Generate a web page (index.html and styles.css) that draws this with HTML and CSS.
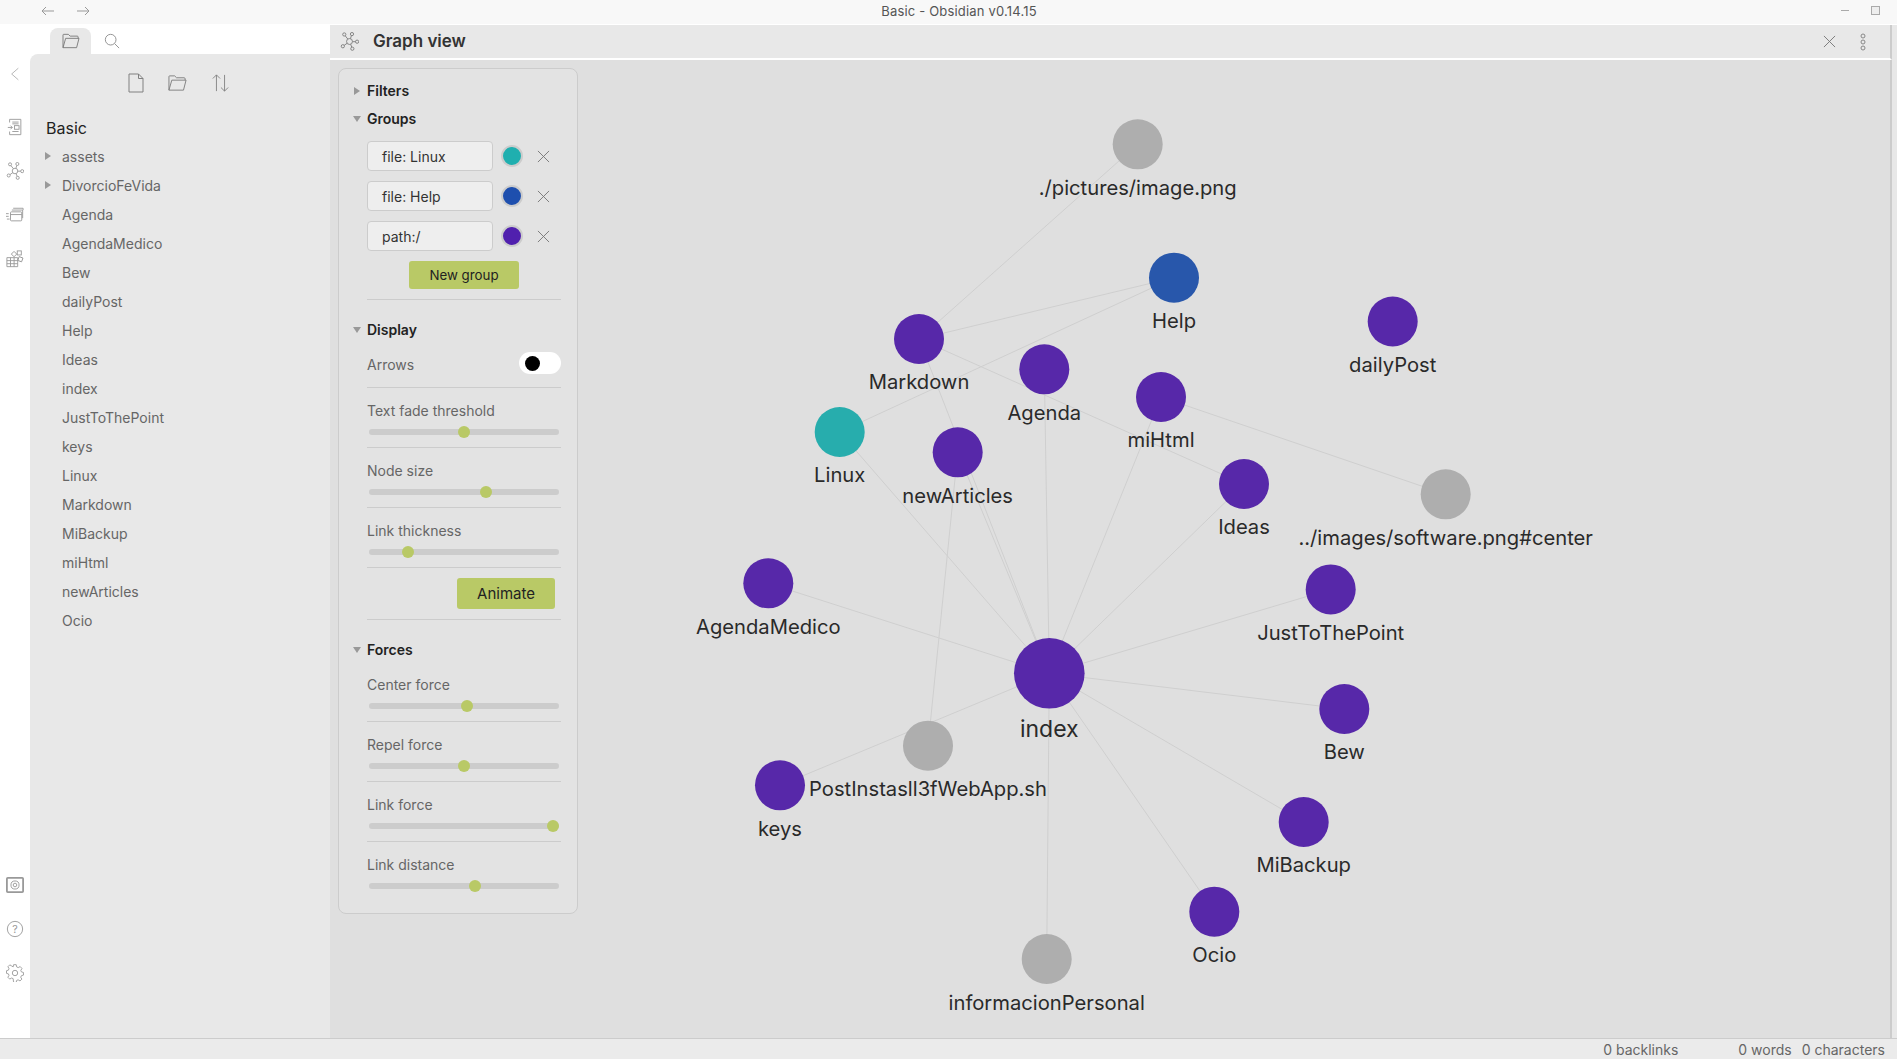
FILE: index.html
```html
<!DOCTYPE html>
<html lang="en">
<head>
<meta charset="utf-8">
<title>Basic - Obsidian v0.14.15</title>
<link rel="stylesheet" href="styles.css">
</head>
<body>
<svg class="defs" width="0" height="0">
  <symbol id="i-graph" viewBox="0 0 20 20">
    <g fill="none" stroke="currentColor" stroke-width="1">
      <circle cx="10" cy="10" r="3.1"/><circle cx="4.5" cy="2.6" r="1.7"/><circle cx="12.6" cy="2.2" r="1.7"/><circle cx="18" cy="10.2" r="1.7"/><circle cx="13" cy="17.6" r="1.7"/><circle cx="3" cy="15" r="1.7"/>
      <path d="M5.5 4 8.2 7.4M12 3.9 11 7M16.3 10.2H13.1M12.4 16 11.2 12.9M4.4 14 7.5 11.9"/>
    </g>
  </symbol>
  <symbol id="i-folder" viewBox="0 0 20 18">
    <path d="M1 16.5V2.2Q1 1.5 1.8 1.5H7L9 3.5H17Q18 3.5 18 4.5V6M1 16.5H16.3L19 6H4L1 16.5Z" fill="none" stroke="currentColor" stroke-width="1"/>
  </symbol>
</svg>

<header class="titlebar">
  <div class="nav">
    <svg class="nav-arrow" viewBox="0 0 14 10"><path d="M13 5H1M5 1 1 5l4 4"/></svg>
    <svg class="nav-arrow" viewBox="0 0 14 10"><path d="M1 5h12M9 1l4 4-4 4"/></svg>
  </div>
  <div class="app-title">Basic - Obsidian v0.14.15</div>
  <div class="win-ctl">
    <span class="win-min"></span>
    <span class="win-max"></span>
  </div>
</header>

<div class="workspace">
  <nav class="ribbon">
    <svg class="rib-chevron" viewBox="0 0 12 16"><path d="M10 1 2 8l8 7"/></svg>
    <div class="rib-top">
      <svg class="rib-ico" viewBox="0 0 18 20"><g fill="none" stroke="currentColor"><path d="M3 5V1.5h12.5v17H3V15"/><path d="M6 4.5h7M6 6.5h7"/><path d="M1 10.500h5M4 8.500l2 2-2 2"/><rect x="8.500" y="8.500" width="5" height="4"/><path d="M6 15h7"/></g></svg>
      <svg class="rib-ico" viewBox="0 0 20 20"><use href="#i-graph"/></svg>
      <svg class="rib-ico" viewBox="0 0 20 18"><g fill="none" stroke="currentColor"><rect x="5" y="5.500" width="12.500" height="10" rx="1"/><path d="M5 8.500h12.500M6.500 3.500h12v9M8 1.500h11v2M0 7.500h3M0 10.500h3M1 13.500h3"/></g></svg>
      <svg class="rib-ico" viewBox="0 0 20 20"><g fill="none" stroke="currentColor"><path d="M1 8.500h12v10H1zM5 8.500v10M9 8.500v10M1 11.800h12M1 15.200h12"/><rect x="12.500" y="1" width="4.500" height="4.500"/><rect x="6.800" y="2.500" width="4.200" height="4.200" transform="rotate(45 9 4.600)"/><rect x="13.800" y="8" width="4.500" height="4.500" transform="rotate(20 16 10)"/></g></svg>
    </div>
    <div class="rib-bottom">
      <svg class="rib-ico" viewBox="0 0 20 18"><g fill="none" stroke="currentColor"><rect x="1" y="1" width="18" height="16" rx="1" stroke-width="2"/><circle cx="10" cy="9" r="4.500"/><circle cx="10" cy="9" r="2"/></g></svg>
      <svg class="rib-ico" viewBox="0 0 20 20"><circle cx="10" cy="10" r="8.500" fill="none" stroke="currentColor"/><text class="help-q" x="10" y="14.500">?</text></svg>
      <svg class="rib-ico" viewBox="0 0 20 20"><g fill="none" stroke="currentColor"><circle cx="10" cy="10" r="3"/><path d="M8.500 1h3l.5 2.500 1.700.8 2.300-1.200 2 2.200-1.300 2.200.6 1.600 2.400.7v3l-2.400.7-.7 1.700 1.300 2.100-2.100 2.100-2.200-1.300-1.600.7-.5 2.300h-3L8 16.800l-1.700-.7-2.200 1.200L2 15.200l1.300-2.100-.7-1.700L.5 10.800v-3l2.100-.6.700-1.700L2.100 3.300 4.200 1.200l2.100 1.200L8 3.500z" transform="translate(.100 -.2) scale(.98)"/></g></svg>
    </div>
  </nav>

  <aside class="left-pane">
    <div class="tabs">
      <div class="tab tab-active"><svg class="tab-ico" viewBox="0 0 20 18"><use href="#i-folder"/></svg></div>
      <div class="tab"><svg class="tab-ico" viewBox="0 0 18 18"><g fill="none" stroke="currentColor"><circle cx="7.500" cy="7.500" r="6"/><path d="m12 12 5 5"/></g></svg></div>
    </div>
    <div class="sidebar">
      <div class="file-actions">
        <svg class="act-ico" viewBox="0 0 16 20"><path d="M1 1h9.500L15 5.500V19H1zM10.500 1v4.500H15" fill="none" stroke="currentColor"/></svg>
        <svg class="act-ico act-wide" viewBox="0 0 20 18"><use href="#i-folder"/></svg>
        <svg class="act-ico act-wide" viewBox="0 0 20 20"><path d="M5.500 19V1M1.500 5l4-4 4 4M14.500 1v18M10.500 15l4 4 4-4" fill="none" stroke="currentColor"/></svg>
      </div>
      <div class="vault">Basic</div>
      <ul class="files">
        <li class="file folder">assets</li>
        <li class="file folder">DivorcioFeVida</li>
        <li class="file">Agenda</li>
        <li class="file">AgendaMedico</li>
        <li class="file">Bew</li>
        <li class="file">dailyPost</li>
        <li class="file">Help</li>
        <li class="file">Ideas</li>
        <li class="file">index</li>
        <li class="file">JustToThePoint</li>
        <li class="file">keys</li>
        <li class="file">Linux</li>
        <li class="file">Markdown</li>
        <li class="file">MiBackup</li>
        <li class="file">miHtml</li>
        <li class="file">newArticles</li>
        <li class="file">Ocio</li>
      </ul>
    </div>
  </aside>

  <main class="main">
    <div class="view-head">
      <svg class="view-ico" viewBox="0 0 20 20"><use href="#i-graph"/></svg>
      <h1 class="view-title">Graph view</h1>
      <svg class="head-x" viewBox="0 0 14 14"><path d="m1 1 12 12M13 1 1 13"/></svg>
      <svg class="head-dots" viewBox="0 0 6 18"><g fill="none" stroke="currentColor"><circle cx="3" cy="3" r="2"/><circle cx="3" cy="9" r="2"/><circle cx="3" cy="15" r="2"/></g></svg>
    </div>
    <div class="graph">
      <svg class="canvas" viewBox="330 60 1560 978">
        <g class="edges">
          <line x1="919" y1="339" x2="1137.700" y2="144.300"/>
          <line x1="919" y1="339" x2="1174" y2="277.700"/>
          <line x1="839.700" y1="432" x2="1174" y2="277.700"/>
          <line x1="919" y1="339" x2="1049.300" y2="673.300"/>
          <line x1="919" y1="339" x2="1244" y2="484"/>
          <line x1="1044.300" y1="369.300" x2="1049.300" y2="673.300"/>
          <line x1="1161" y1="397" x2="1049.300" y2="673.300"/>
          <line x1="1161" y1="397" x2="1445.700" y2="494.300"/>
          <line x1="839.700" y1="432" x2="1049.300" y2="673.300"/>
          <line x1="957.700" y1="452.300" x2="1049.300" y2="673.300"/>
          <line x1="957.700" y1="452.300" x2="928" y2="745.700"/>
          <line x1="1244" y1="484" x2="1049.300" y2="673.300"/>
          <line x1="1330.700" y1="589.400" x2="1049.300" y2="673.300"/>
          <line x1="1344.300" y1="709" x2="1049.300" y2="673.300"/>
          <line x1="1303.700" y1="822" x2="1049.300" y2="673.300"/>
          <line x1="1214.300" y1="911.700" x2="1049.300" y2="673.300"/>
          <line x1="768.300" y1="583.300" x2="1049.300" y2="673.300"/>
          <line x1="780" y1="785.300" x2="1049.300" y2="673.300"/>
          <line x1="1046.700" y1="959" x2="1049.300" y2="673.300"/>
        </g>
        <g class="nodes">
          <circle class="n-gray" cx="1137.700" cy="144.300" r="25"/>
          <circle class="n-blue" cx="1174" cy="277.700" r="25"/>
          <circle class="n-purple" cx="919" cy="339" r="25"/>
          <circle class="n-purple" cx="1044.300" cy="369.300" r="25"/>
          <circle class="n-purple" cx="1161" cy="397" r="25"/>
          <circle class="n-teal" cx="839.700" cy="432" r="25"/>
          <circle class="n-purple" cx="957.700" cy="452.300" r="25"/>
          <circle class="n-purple" cx="1244" cy="484" r="25"/>
          <circle class="n-purple" cx="1392.700" cy="321.500" r="25"/>
          <circle class="n-gray" cx="1445.700" cy="494.300" r="25"/>
          <circle class="n-purple" cx="1330.700" cy="589.400" r="25"/>
          <circle class="n-purple" cx="768.300" cy="583.300" r="25"/>
          <circle class="n-purple" cx="1049.300" cy="673.300" r="35.300"/>
          <circle class="n-purple" cx="1344.300" cy="709" r="25"/>
          <circle class="n-gray" cx="928" cy="745.700" r="25"/>
          <circle class="n-purple" cx="780" cy="785.300" r="25"/>
          <circle class="n-purple" cx="1303.700" cy="822" r="25"/>
          <circle class="n-purple" cx="1214.300" cy="911.700" r="25"/>
          <circle class="n-gray" cx="1046.700" cy="959" r="25"/>
        </g>
        <g class="labels">
          <text x="1137.700" y="194.500">./pictures/image.png</text>
          <text x="1174" y="328">Help</text>
          <text x="919" y="389">Markdown</text>
          <text x="1044.300" y="419.500">Agenda</text>
          <text x="1161" y="447">miHtml</text>
          <text x="839.700" y="482">Linux</text>
          <text x="957.700" y="502.500">newArticles</text>
          <text x="1244" y="534">Ideas</text>
          <text x="1392.700" y="371.500">dailyPost</text>
          <text x="1445.700" y="544.500">../images/software.png#center</text>
          <text x="1330.700" y="639.500">JustToThePoint</text>
          <text x="768.300" y="633.500">AgendaMedico</text>
          <text class="lbl-big" x="1049.300" y="736.500">index</text>
          <text x="1344.300" y="759">Bew</text>
          <text x="928" y="796">PostInstasll3fWebApp.sh</text>
          <text x="780" y="835.500">keys</text>
          <text x="1303.700" y="872">MiBackup</text>
          <text x="1214.300" y="961.500">Ocio</text>
          <text x="1046.700" y="1009.500">informacionPersonal</text>
        </g>
      </svg>

      <section class="controls">
        <div class="sec-head closed">Filters</div>
        <div class="sec-head">Groups</div>
        <div class="groups">
          <div class="group"><div class="g-input">file: Linux</div><span class="swatch sw-teal"></span><svg class="g-x" viewBox="0 0 14 14"><path d="m1 1 12 12M13 1 1 13"/></svg></div>
          <div class="group"><div class="g-input">file: Help</div><span class="swatch sw-blue"></span><svg class="g-x" viewBox="0 0 14 14"><path d="m1 1 12 12M13 1 1 13"/></svg></div>
          <div class="group"><div class="g-input">path:/</div><span class="swatch sw-purple"></span><svg class="g-x" viewBox="0 0 14 14"><path d="m1 1 12 12M13 1 1 13"/></svg></div>
          <div class="new-wrap"><button class="btn btn-new">New group</button></div>
        </div>
        <div class="sec-head sec-display">Display</div>
        <div class="settings">
          <div class="row-toggle"><span class="set-label">Arrows</span><span class="toggle"><span class="toggle-knob"></span></span></div>
          <div class="row-slider"><div class="set-label">Text fade threshold</div><div class="track"><span class="knob" style="left:49.800%"></span></div></div>
          <div class="row-slider"><div class="set-label">Node size</div><div class="track"><span class="knob" style="left:61.400%"></span></div></div>
          <div class="row-slider"><div class="set-label">Link thickness</div><div class="track"><span class="knob" style="left:20.500%"></span></div></div>
          <div class="row-btn"><button class="btn btn-animate">Animate</button></div>
        </div>
        <div class="sec-head sec-forces">Forces</div>
        <div class="settings">
          <div class="row-slider row-first"><div class="set-label">Center force</div><div class="track"><span class="knob" style="left:51.600%"></span></div></div>
          <div class="row-slider"><div class="set-label">Repel force</div><div class="track"><span class="knob" style="left:49.800%"></span></div></div>
          <div class="row-slider"><div class="set-label">Link force</div><div class="track"><span class="knob" style="left:96.800%"></span></div></div>
          <div class="row-slider row-last"><div class="set-label">Link distance</div><div class="track"><span class="knob" style="left:55.800%"></span></div></div>
        </div>
      </section>
    </div>
  </main>
</div>

<footer class="status">
  <span class="st-back">0 backlinks</span>
  <span class="st-words">0 words</span>
  <span>0 characters</span>
</footer>
</body>
</html>
```

FILE: styles.css
```css
* { box-sizing: border-box; }
html, body { margin: 0; height: 100%; }
body {
  display: flex;
  flex-direction: column;
  height: 100vh;
  overflow: hidden;
  background: #fff;
  font-family: Inter, "Noto Sans", sans-serif;
  color: #222;
}
.defs { position: absolute; }

/* Title bar */
.titlebar {
  flex: 0 0 24px;
  display: flex;
  align-items: center;
  position: relative;
  background: #f8f8f8;
  padding-bottom: 3px;
}
.nav { display: flex; gap: 21px; padding-left: 41px; }
.nav-arrow { width: 14px; height: 10px; fill: none; stroke: #999; stroke-width: 1; }
.app-title {
  position: absolute;
  left: 21px; right: 0; top: 3px;
  text-align: center;
  font-size: 13px;
  line-height: 17px;
  letter-spacing: .18px;
  color: #555;
}
.win-ctl { margin-left: auto; display: flex; align-items: center; gap: 22px; padding-right: 17px; }
.win-min { width: 8px; height: 1px; background: #aaa; }
.win-max { width: 9px; height: 9px; border: 1px solid #aaa; background: #eee; }

.workspace { flex: 1; display: flex; min-height: 0; }

/* Ribbon */
.ribbon {
  flex: 0 0 30px;
  display: flex;
  flex-direction: column;
  align-items: center;
  background: #fff;
  color: #aaa;
  padding-top: 41px;
}
.rib-chevron { width: 10px; height: 18px; fill: none; stroke: #aaa; stroke-width: 1; }
.rib-top { display: flex; flex-direction: column; align-items: center; gap: 26px; margin-top: 35px; }
.rib-bottom { display: flex; flex-direction: column; align-items: center; gap: 26px; margin-top: auto; margin-bottom: 56px; }
.rib-ico { width: 18px; height: 18px; color: #999; display: block; }
.help-q { font-size: 12px; text-anchor: middle; fill: currentColor; font-family: Inter, sans-serif; }

/* Left pane */
.left-pane { flex: 0 0 300px; display: flex; flex-direction: column; background: #fff; }
.tabs { flex: 0 0 30px; display: flex; padding: 4px 0 0 20px; }
.tab { width: 41px; display: flex; align-items: center; justify-content: center; color: #888; border-radius: 8px 8px 0 0; }
.tab-active { background: #e8e8e8; color: #777; }
.tab-ico { width: 18px; height: 16px; display: block; }
.sidebar { flex: 1; background: #e8e8e8; border-top-left-radius: 8px; padding-top: 20px; }
.file-actions { display: flex; justify-content: center; align-items: center; gap: 24px; color: #808080; height: 18px; padding-right: 2px; }
.act-ico { width: 16px; height: 20px; display: block; }
.act-wide { width: 19px; height: 18px; }
.vault { margin: 26px 0 0 16px; font-size: 16px; line-height: 20px; color: #222; }
.files { list-style: none; margin: 4px 0 0; padding: 0 0 0 32px; }
.file { height: 29px; line-height: 29px; font-size: 14px; color: #666; position: relative; }
.folder::before {
  content: "";
  position: absolute;
  left: -17px; top: 10px;
  border-left: 6px solid #999;
  border-top: 4px solid transparent;
  border-bottom: 4px solid transparent;
}

/* Main */
.main { flex: 1; min-width: 0; display: flex; flex-direction: column; background: #e8e8e8; border-top: 1px solid #fff; }
.view-head {
  flex: 0 0 35px;
  display: flex;
  align-items: center;
  background: #e8e8e8;
  border-bottom: 2px solid #fff;
  border-right: 2px solid #ccc;
  border-top-left-radius: 6px;
  margin-right: 5px;
  padding: 0 24px 0 10px;
}
.view-ico { width: 19px; height: 19px; color: #808080; display: block; }
.view-title { margin: 0 0 0 14px; font-size: 17px; font-weight: 600; color: #333; line-height: 20px; position: relative; top: -1px; }
.head-x { width: 13px; height: 13px; margin-left: auto; fill: none; stroke: #777; stroke-width: 1; }
.head-dots { width: 6px; height: 18px; margin-left: 24px; color: #888; }

.graph { flex: 1; position: relative; background: #dfdfdf; border-right: 2px solid #ccc; min-height: 0; margin-right: 5px; }
.canvas { position: absolute; left: 0; top: 0; width: 1560px; height: 978px; }
.edges line { stroke: #cfcfcf; stroke-width: 1; }
.n-gray { fill: #aeaeae; }
.n-blue { fill: #2857ab; }
.n-purple { fill: #5728a9; }
.n-teal { fill: #27adad; }
.labels text { font-size: 20.200px; text-anchor: middle; fill: #2a2a2a; }
.labels .lbl-big { font-size: 23px; }

/* Controls */
.controls {
  position: absolute;
  left: 8px; top: 8px;
  width: 240px; height: 846px;
  background: #e3e3e3;
  border: 1px solid #ccc;
  border-radius: 8px;
  padding: 8px 0 0 28px;
}
.sec-head { height: 28px; line-height: 28px; font-size: 14px; font-weight: 600; color: #222; position: relative; }
.sec-head::before {
  content: "";
  position: absolute;
  left: -14px; top: 11px;
  border-top: 6px solid #999;
  border-left: 4px solid transparent;
  border-right: 4px solid transparent;
}
.sec-head.closed::before {
  left: -13px; top: 10px;
  border-left: 6px solid #999;
  border-right: 0;
  border-top: 4px solid transparent;
  border-bottom: 4px solid transparent;
}
.groups { padding-top: 8px; width: 194px; border-bottom: 1px solid #ccc; height: 167px; }
.group { display: flex; align-items: center; height: 30px; margin-bottom: 10px; }
.g-input {
  width: 126px; height: 30px;
  border: 1px solid #ccc;
  border-radius: 4px;
  background: #eee;
  font-size: 14px;
  line-height: 29px;
  padding-left: 14px;
  color: #333;
}
.swatch { width: 22px; height: 22px; border-radius: 50%; border: 2px solid #ccc; margin-left: 8px; }
.sw-teal { background: #1fafaf; }
.sw-blue { background: #1e4fae; }
.sw-purple { background: #5020ae; }
.g-x { width: 13px; height: 13px; margin-left: 14px; fill: none; stroke: #777; stroke-width: 1; }
.new-wrap { display: flex; padding-left: 42px; }
.btn { border: 0; background: #b9c966; border-radius: 3px; color: #222; font-family: inherit; padding: 0; }
.btn-new { width: 110px; height: 28px; font-size: 13.300px; }
.btn-animate { width: 98px; height: 31px; font-size: 15px; }
.sec-display { margin-top: 16px; }
.sec-forces { margin-top: 16px; }
.settings { width: 194px; }
.set-label { font-size: 14px; line-height: 18px; color: #666; }
.row-toggle { height: 44px; display: flex; align-items: flex-start; justify-content: space-between; padding-top: 8px; border-bottom: 1px solid #ccc; }
.row-toggle .set-label { padding-top: 4px; }
.toggle { width: 42px; height: 22px; border-radius: 11px; background: #fff; position: relative; }
.toggle-knob { position: absolute; left: 5.500px; top: 3.500px; width: 15px; height: 15px; border-radius: 50%; background: #000; }
.row-slider { height: 60px; padding-top: 14px; border-bottom: 1px solid #ccc; }
.row-first { height: 58px; padding-top: 12px; }
.row-last { border-bottom: 0; }
.track { position: relative; height: 6px; margin: 9px 2px 0; border-radius: 3px; background: #ccc; }
.knob { position: absolute; top: -3px; width: 12px; height: 12px; margin-left: -6px; border-radius: 50%; background: #b9c966; }
.row-btn { height: 52px; display: flex; justify-content: flex-end; align-items: center; padding-right: 6px; border-bottom: 1px solid #ccc; }

/* Status bar */
.status {
  flex: 0 0 21px;
  display: flex;
  justify-content: flex-end;
  align-items: center;
  gap: 10px;
  background: #ebebeb;
  border-top: 1px solid #ccc;
  padding: 0 12px 0 0;
  font-size: 14px;
  color: #666;
}
.st-back { margin-right: 50px; }
```
